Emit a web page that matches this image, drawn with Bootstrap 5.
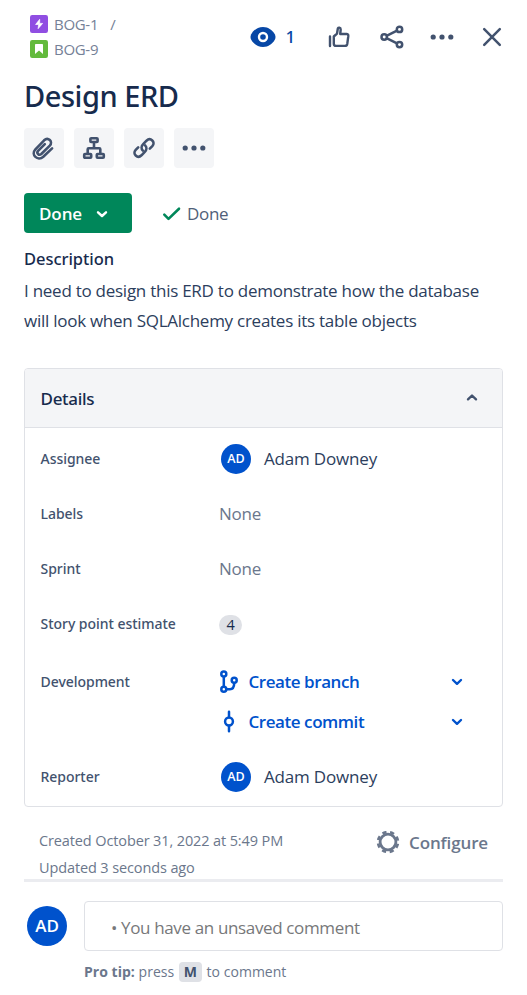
<!DOCTYPE html>
<html lang="en">
<head>
<meta charset="utf-8">
<meta name="viewport" content="width=device-width, initial-scale=1">
<title>BOG-9 Design ERD</title>
<link href="https://cdn.jsdelivr.net/npm/bootstrap@5.3.0/dist/css/bootstrap.min.css" rel="stylesheet">
<style>
body{font-family:"Open Sans","Noto Sans",sans-serif;font-size:17px;color:#172b4d;background:#fff;letter-spacing:-.18px}
svg{display:block;flex:none}
.issue{padding:0 24px}
.issue-top{height:74px;padding-left:6px}
.crumbs{padding-top:11px}
.crumb{height:26px;gap:6px;font-size:15px;color:#758197;letter-spacing:-.3px;line-height:22px}
.crumb+.crumb{margin-top:-1px}
.crumb .sep{margin-left:6px}
.tools{padding-top:25px;color:#42526e}
.watch{color:#0747a6;font-size:17px;line-height:24px;gap:9px}
.t-like{margin-left:32px}
.t-share{margin-left:29px}
.t-more{margin-left:26px}
.t-close{margin:0 -1px 0 26px}
.issue-title{font:500 29px/44px "Noto Sans","Open Sans",sans-serif;letter-spacing:-.46px;margin:0}
.quick{margin-top:10px;gap:10px}
.quick .btn{width:40px;height:40px;background:#f4f5f7;border:0;border-radius:4px;color:#42526e}
.status{margin-top:25px;height:40px}
.status .btn{width:108px;height:40px;padding:1px 0 0 15px;border:0;border-radius:4px;background:#00875a;color:#fff;font-size:17px;font-weight:600;letter-spacing:-.1px;gap:13px}
.resolved{margin-left:30px;padding-top:2px;gap:6px;color:#505f79;letter-spacing:-.3px}
.medium{font-family:"Noto Sans","Open Sans",sans-serif;font-weight:500}
.desc-head{font-size:16.5px;line-height:24px;margin:14px 0 0;letter-spacing:-.05px}
.desc{line-height:30px;margin:5px 0 0;letter-spacing:-.26px;white-space:nowrap;color:#2c3e5d}
.person{color:#2c3e5d;padding-top:1px}
.details{margin-top:32px;height:439px;border:1px solid #dfe1e6;border-radius:4px}
.details-head{height:59px;padding:0 24px 0 15.5px;background:#f4f5f7;border-bottom:1px solid #dfe1e6;border-radius:3px 3px 0 0;letter-spacing:-.3px}
.details-head span{padding-top:1px}
.fields{padding:3px 0 0 15.5px}
.field{height:55px}
.field-name{width:178.5px;font-size:14px;color:#42526e;letter-spacing:-.04px}
.unset{color:#6b778c;letter-spacing:-.25px}
.points{width:23px;height:20px;border-radius:10px;background:#dfe1e6;font-size:14.5px;line-height:20px;margin-top:2px}
.dev{margin-top:11px;height:87px}
.dev .field-name{line-height:40px}
.dev-row{height:40px;width:244px;color:#0052cc;font-weight:600;letter-spacing:-.44px}
.dev-row .sym{width:29.5px}
.initials{border-radius:50%;background:#0052cc;color:#fff;font-weight:600}
.ini-sm{width:30px;height:30px;font-size:12.5px;padding-top:1px;margin:0 13px 0 2px;letter-spacing:0}
.ini-lg{width:40px;height:40px;font-size:17px;margin:5px 17px 0 3px;letter-spacing:0}
.dates{height:72px;padding:23px 15px 0;font-size:14.5px;color:#6b778c;letter-spacing:-.12px;line-height:22px}
.dates div+div{margin-top:5px}
.configure{gap:9px;height:26px;font-size:17px;font-weight:600;letter-spacing:-.14px}
.rule{height:3px;background:#ebecf0;margin-bottom:19px}
.comment{height:50px;border:1px solid #dfe1e6;border-radius:4px;padding:3px 0 0 26px;color:#77787a;letter-spacing:-.36px}
.tip{margin-top:10px;font-size:14px;line-height:22px;color:#6b778c;letter-spacing:.03px}
.tip kbd{display:inline-block;width:23px;height:20px;padding:0;margin:0 1px;border-radius:4px;background:#dfe1e6;color:#42526e;font:700 14px/20px "Open Sans",sans-serif;text-align:center}
</style>
</head>
<body>
<main class="issue">
  <header class="issue-top d-flex justify-content-between">
    <div class="crumbs">
      <div class="crumb d-flex align-items-center">
        <svg width="18" height="18" viewBox="0 0 18 18"><rect width="18" height="18" rx="2.200" fill="#904ee2"/><path d="M9.700 4.300 5.600 9.500h3L8.100 13.700 12.600 8.400H9.700z" fill="#fff" stroke="#fff" stroke-width=".7" stroke-linejoin="round"/></svg>
        <span>BOG-1</span><span class="sep">/</span>
      </div>
      <div class="crumb d-flex align-items-center">
        <svg width="18" height="18" viewBox="0 0 18 18"><rect width="18" height="18" rx="2.200" fill="#63ba3c"/><path d="M5 4.800q0-.8.8-.8h6.400q.8 0 .8.800V14l-4-3.600L5 14z" fill="#fff"/></svg>
        <span>BOG-9</span>
      </div>
    </div>
    <div class="tools d-flex align-items-start">
      <span class="watch medium d-flex align-items-center"><svg width="26" height="24" viewBox="0 0 26 24"><path d="M13 2c5.500 0 9.500 3.300 11.800 7.200q1.400 2.800 0 5.600C22.500 18.700 18.500 22 13 22S3.500 18.700 1.200 14.800q-1.400-2.800 0-5.600C3.500 5.300 7.500 2 13 2z" fill="currentColor"/><circle cx="13" cy="12" r="4" fill="#0747a6" stroke="#fff" stroke-width="2.400"/></svg><span>1</span></span>
      <svg class="t-like" width="24" height="24" viewBox="0 0 24 24" fill="none" stroke="currentColor" stroke-width="2.400" stroke-linejoin="round" stroke-linecap="round"><path d="M3 11.500V21M6.800 11.500 10 8.600l.8-4.800c.3-1.800 3-1.400 2.900.8L13.200 9h6.300q2 .1 1.800 2.200l-1 7.500q-.4 2.200-2.500 2.200H9q-2.200 0-2.200-2.200z"/></svg>
      <svg class="t-share" width="24" height="24" viewBox="0 0 24 24" fill="none" stroke="currentColor" stroke-width="2.500"><circle cx="4.200" cy="12" r="2.700"/><circle cx="19.500" cy="4.400" r="2.700"/><circle cx="19.500" cy="19.600" r="2.700"/><path d="m6.500 10.800 10.500-5.200M6.500 13.200 17 18.400"/></svg>
      <svg class="t-more" width="24" height="24" viewBox="0 0 24 24" fill="currentColor"><circle cx="3.200" cy="12" r="2.600"/><circle cx="12" cy="12" r="2.600"/><circle cx="20.800" cy="12" r="2.600"/></svg>
      <svg class="t-close" width="24" height="24" viewBox="0 0 24 24" fill="none" stroke="currentColor" stroke-width="2.500" stroke-linecap="round"><path d="m4.200 4.200 15.600 15.600M19.800 4.200 4.200 19.800"/></svg>
    </div>
  </header>
  <h1 class="issue-title">Design ERD</h1>
  <div class="quick d-flex">
    <button class="btn p-0 d-flex align-items-center justify-content-center" aria-label="Attach"><svg width="26" height="26" viewBox="0 0 26 26" fill="none" stroke="currentColor" stroke-width="2.600" stroke-linecap="round"><path d="m22.300 13.400-8.800 8.300c-5.500 4.900-12.900-1.900-7.900-7.400l8.700-9c4-3.800 9.300 1.400 5.700 5.300l-8.500 8.400c-2.400 2-5.200-.9-3.200-3.100l6.700-6.700" transform="translate(-1.200 0)"/></svg></button>
    <button class="btn p-0 d-flex align-items-center justify-content-center" aria-label="Add child"><svg width="26" height="26" viewBox="0 0 26 26" fill="none" stroke="currentColor" stroke-width="2.600" stroke-linejoin="round"><rect x="9.400" y="3.200" width="7.200" height="3.800" rx=".8"/><rect x="3.200" y="19" width="7" height="3.800" rx=".8"/><rect x="15.800" y="19" width="7" height="3.800" rx=".8"/><path d="M13 7.500V13M6.700 19v-4.800q0-1 1-1h10.600q1 0 1 1V19"/></svg></button>
    <button class="btn p-0 d-flex align-items-center justify-content-center" aria-label="Link"><svg width="26" height="26" viewBox="0 0 26 26" fill="none" stroke="currentColor" stroke-width="2.600" stroke-linecap="round"><path d="M11.900 15.700C10 13.800 10.300 11.200 12 9.400l3.500-3.700c4-3.800 9.500 1.400 5.800 5.400l-2.500 2.500"/><path d="M14.100 10.300c1.900 1.900 1.600 4.500-.1 6.300l-3.500 3.700c-4 3.800-9.500-1.400-5.800-5.400l2.500-2.500"/></svg></button>
    <button class="btn p-0 d-flex align-items-center justify-content-center" aria-label="More"><svg width="24" height="24" viewBox="0 0 24 24" fill="currentColor"><circle cx="3.200" cy="12" r="2.600"/><circle cx="12" cy="12" r="2.600"/><circle cx="20.800" cy="12" r="2.600"/></svg></button>
  </div>
  <div class="status d-flex align-items-center">
    <button class="btn d-flex align-items-center"><span>Done</span><svg width="14" height="12" viewBox="0 0 14 12" fill="none" stroke="currentColor" stroke-width="2.400" stroke-linecap="round" stroke-linejoin="round"><path d="m3 4.300 4 3.700 4-3.700"/></svg></button>
    <span class="resolved d-flex align-items-center"><svg width="19" height="16" viewBox="0 0 19 16" fill="none" stroke="#00875a" stroke-width="2.600" stroke-linecap="round" stroke-linejoin="round"><path d="m2.300 8.700 4.200 4.200L17 2.700"/></svg><span>Done</span></span>
  </div>
  <h2 class="desc-head medium">Description</h2>
  <p class="desc">I need to design this ERD to demonstrate how the database<br>will look when SQLAlchemy creates its table objects</p>

  <section class="details">
    <div class="details-head medium d-flex align-items-center justify-content-between"><span>Details</span><svg width="12" height="12" viewBox="0 0 12 12" fill="none" stroke="#42526e" stroke-width="2.400" stroke-linecap="round" stroke-linejoin="round"><path d="m2 7.300 4-3.800 4 3.800"/></svg></div>
    <div class="fields">
      <div class="field d-flex align-items-center"><span class="field-name medium">Assignee</span><span class="initials ini-sm d-flex align-items-center justify-content-center">AD</span><span class="person">Adam Downey</span></div>
      <div class="field d-flex align-items-center"><span class="field-name medium">Labels</span><span class="unset">None</span></div>
      <div class="field d-flex align-items-center"><span class="field-name medium">Sprint</span><span class="unset">None</span></div>
      <div class="field d-flex align-items-center"><span class="field-name medium">Story point estimate</span><span class="points text-center">4</span></div>
      <div class="dev d-flex">
        <span class="field-name medium">Development</span>
        <div>
          <div class="dev-row d-flex align-items-center"><span class="sym"><svg width="20" height="24" viewBox="0 0 20 24" fill="none" stroke="currentColor" stroke-width="2.500"><circle cx="4.800" cy="4" r="2.500"/><circle cx="4.800" cy="19.300" r="2.500"/><circle cx="15.200" cy="10.300" r="2.500"/><path d="M4.800 6.600v10.300M7.500 19.300h3.300q4.400-.2 4.400-6.400"/></svg></span><span class="flex-grow-1">Create branch</span><svg width="12" height="12" viewBox="0 0 12 12" fill="none" stroke="currentColor" stroke-width="2.400" stroke-linecap="round" stroke-linejoin="round"><path d="m2 4 4 3.800L10 4"/></svg></div>
          <div class="dev-row d-flex align-items-center"><span class="sym"><svg width="20" height="24" viewBox="0 0 20 24" fill="none" stroke="currentColor" stroke-width="2.500" stroke-linecap="round"><circle cx="10" cy="11.500" r="3.900"/><path d="M10 1.700v5.500M10 15.800v5.500"/></svg></span><span class="flex-grow-1">Create commit</span><svg width="12" height="12" viewBox="0 0 12 12" fill="none" stroke="currentColor" stroke-width="2.400" stroke-linecap="round" stroke-linejoin="round"><path d="m2 4 4 3.800L10 4"/></svg></div>
        </div>
      </div>
      <div class="field d-flex align-items-center"><span class="field-name medium">Reporter</span><span class="initials ini-sm d-flex align-items-center justify-content-center">AD</span><span class="person">Adam Downey</span></div>
    </div>
  </section>

  <div class="dates d-flex justify-content-between">
    <div><div>Created October 31, 2022 at 5:49 PM</div><div>Updated 3 seconds ago</div></div>
    <span class="configure d-flex align-items-center"><svg width="24" height="24" viewBox="-12 -11 24 24" fill="none" stroke="currentColor"><circle r="7.900" stroke-width="2.800"/><circle r="10" stroke-width="2.600" stroke-dasharray="4.200 3.654" stroke-dashoffset="-1.830"/></svg><span>Configure</span></span>
  </div>
  <div class="rule"></div>
  <div class="d-flex">
    <span class="initials ini-lg d-flex flex-shrink-0 align-items-center justify-content-center">AD</span>
    <div class="flex-grow-1">
      <div class="comment d-flex align-items-center">• You have an unsaved comment</div>
      <div class="tip"><b>Pro tip:</b> press <kbd>M</kbd> to comment</div>
    </div>
  </div>
</main>
<script src="https://cdn.jsdelivr.net/npm/bootstrap@5.3.0/dist/js/bootstrap.bundle.min.js"></script>
</body>
</html>
